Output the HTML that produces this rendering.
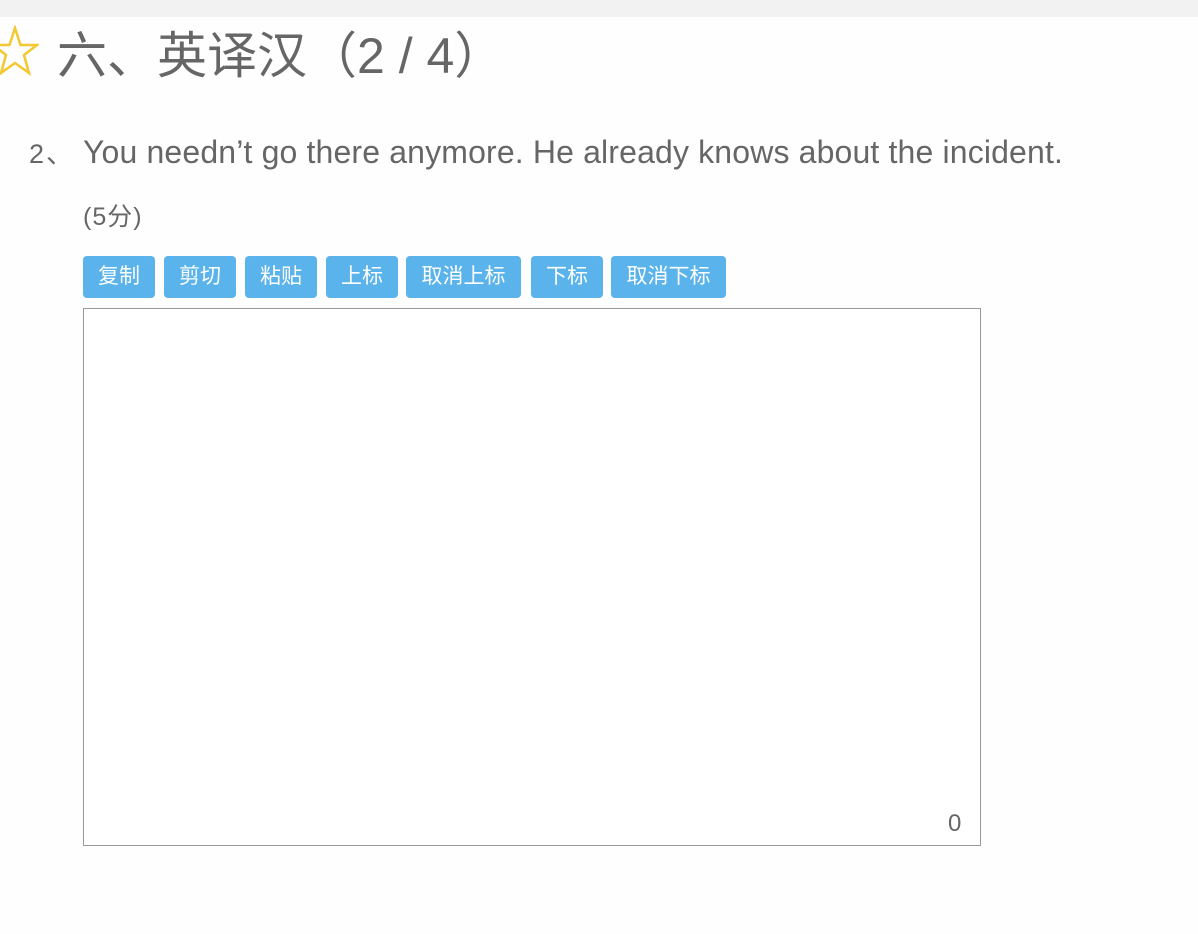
<!DOCTYPE html>
<html><head><meta charset="utf-8"><style>
body{margin:0;width:1198px;height:934px;background:#fefefe;position:relative;overflow:hidden;font-family:"Liberation Sans","Noto Sans CJK SC",sans-serif;color:#666}
.top{position:absolute;left:0;top:0;width:1198px;height:17px;background:#f2f2f2}
.t{position:absolute;left:57px;top:24px;font-size:50px;line-height:64px;color:#666;white-space:nowrap}
.q{position:absolute;top:132px;font-size:32px;line-height:40px;color:#666;white-space:nowrap}
.s{position:absolute;left:83px;top:201px;font-size:25px;line-height:32px;letter-spacing:1px}
.b{position:absolute;top:256px;height:42px;background:#5ab3ea;border-radius:4px;color:#fff;font-size:21px;line-height:42px;text-align:center}
.ta{position:absolute;left:83px;top:308px;width:896px;height:536px;border:1px solid #999;background:#fff}
.c{position:absolute;left:948px;top:810px;font-size:24px;color:#666}
</style></head><body>
<div class="top"></div>
<svg style="position:absolute;left:-5px;top:25px" width="44" height="52" viewBox="0 0 44 52"><polygon points="20,3 25.5,20 42,20 29,30 34,48 20,38 6,48 11,30 -2,20 14.5,20" fill="none" stroke="#f3c830" stroke-width="2.5"/></svg>
<div class="t">六、英译汉（2 / 4）</div>
<div class="q" style="left:29px;font-size:27px;top:134px;letter-spacing:2px">2、</div>
<div class="q" style="left:83px;letter-spacing:0.15px">You needn’t go there anymore. He already knows about the incident.</div>
<div class="s">(5分)</div>
<div class="b" style="left:83px;width:72px">复制</div>
<div class="b" style="left:164px;width:72px">剪切</div>
<div class="b" style="left:245px;width:72px">粘贴</div>
<div class="b" style="left:326px;width:72px">上标</div>
<div class="b" style="left:406px;width:115px">取消上标</div>
<div class="b" style="left:531px;width:72px">下标</div>
<div class="b" style="left:611px;width:115px">取消下标</div>
<div class="ta"></div>
<div class="c">0</div>
</body></html>
